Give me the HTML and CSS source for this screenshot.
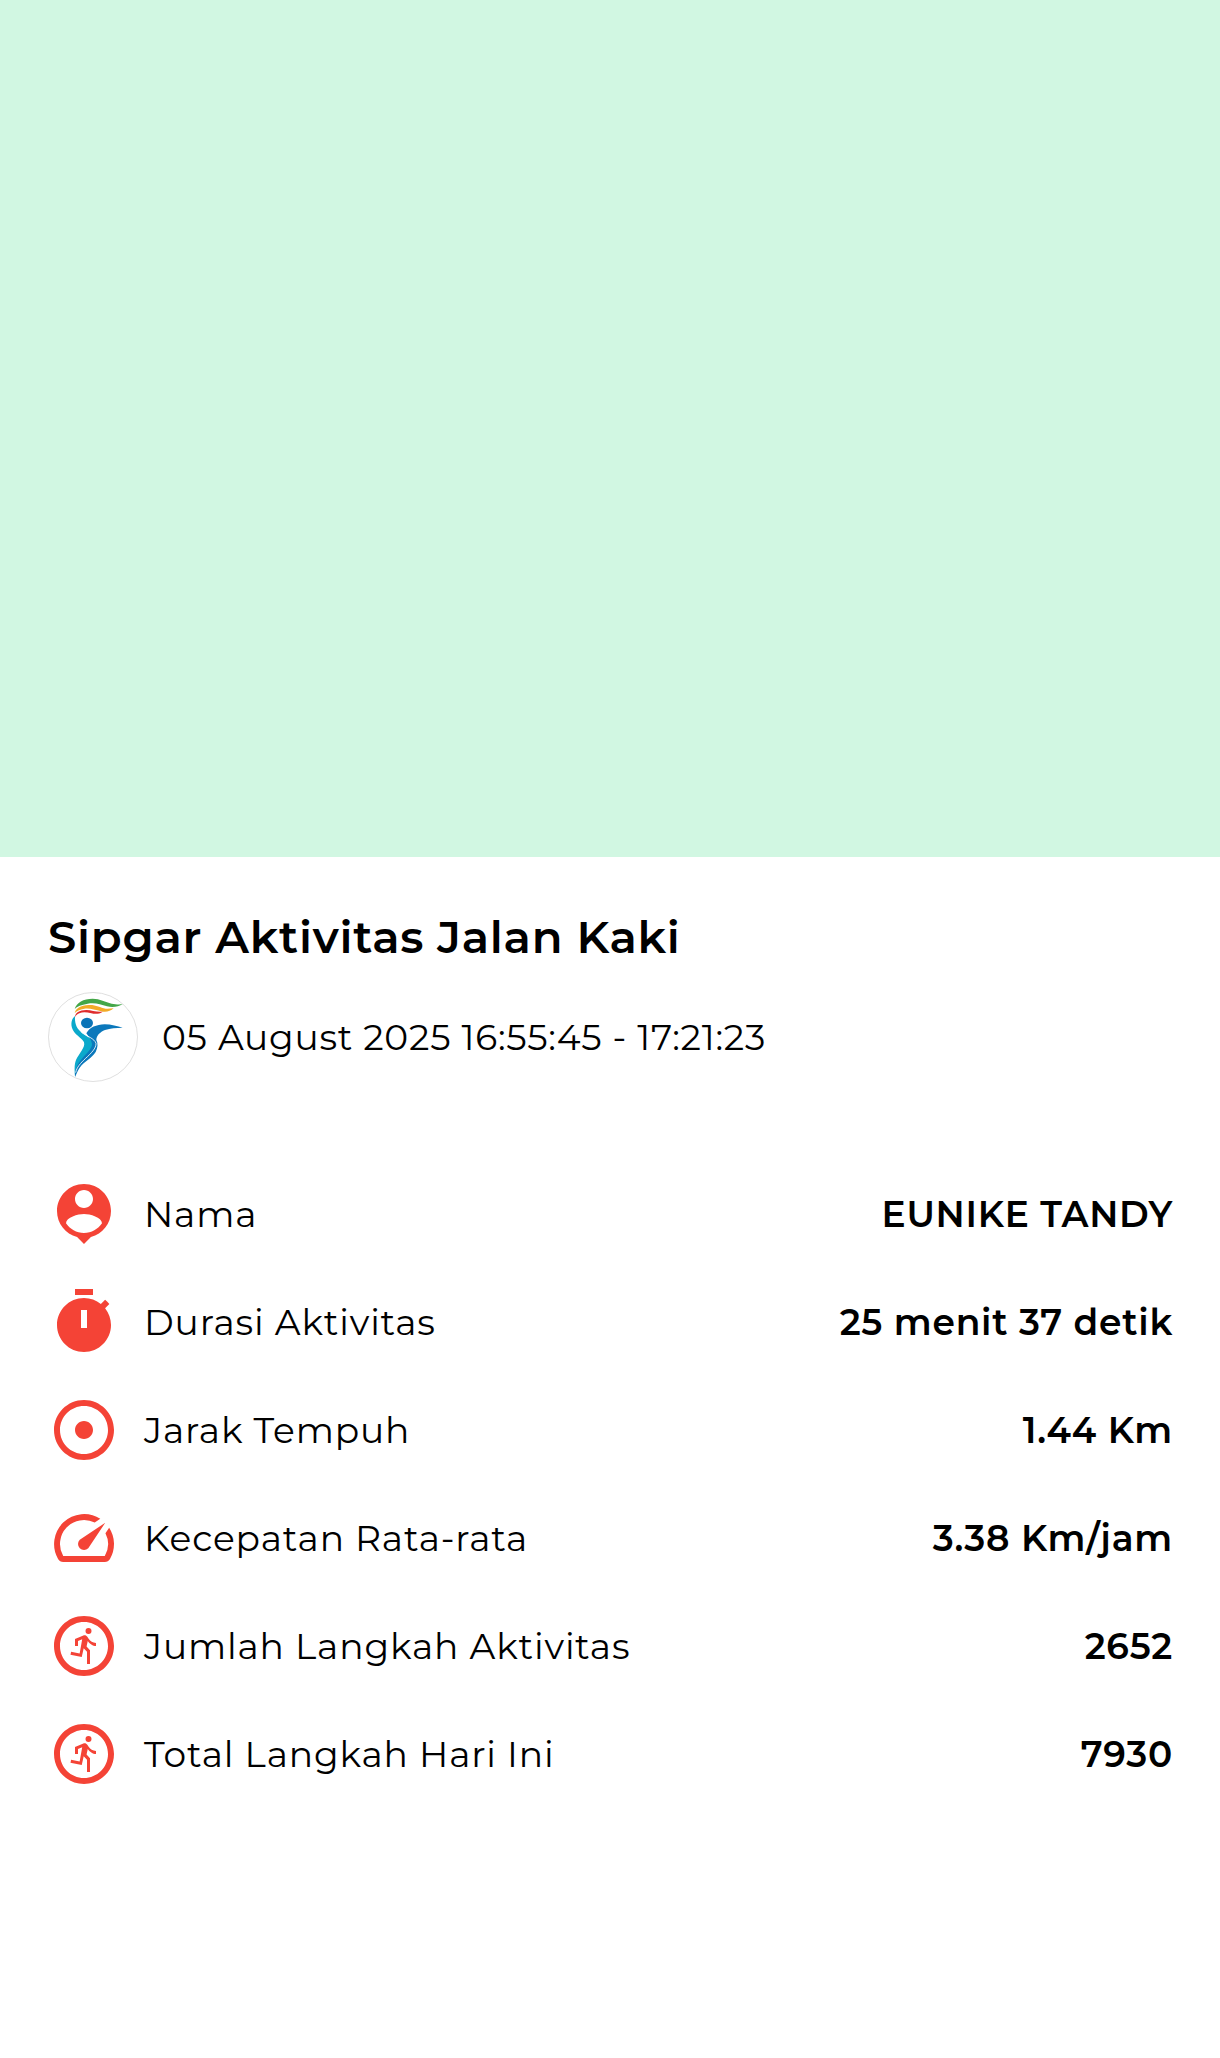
FILE: index.html
```
<!DOCTYPE html>
<html lang="id">
<head>
    <meta charset="UTF-8">
    <meta name="viewport" content="width=device-width, initial-scale=1.0">
    <title>Sipgar Aktivitas Jalan Kaki</title>
    <link rel="stylesheet" href="styles.css">
</head>
<body>
    <div class="map"></div>
    <div class="content">
        <h1>Sipgar Aktivitas Jalan Kaki</h1>
        <div class="activity-time">
            <svg class="logo" viewBox="24 36 270 270">
                <circle cx="159" cy="171" r="133.5" fill="#fff" stroke="#c9c9c9" stroke-width="1.8"/>
                <path fill="#43a648" d="M104 87C110 68 130 56 158 56C180 56 196 66 215 71C228 74 240 73 248 73C236 80 218 84 201 79C182 73 165 67 143 71C124 74 111 79 104 87Z"/>
                <path fill="#f2ab27" d="M104 100C106 86 122 76 146 75C168 74 180 83 197 86C206 87 214 85 221 85C211 94 198 98 183 94C165 89 150 84 133 86C119 88 109 93 104 100Z"/>
                <path fill="#df2c2c" d="M105 112C105 99 118 90 139 90C155 90 169 97 188 95C179 102 166 103 154 100C141 97 129 95 118 100C111 103 107 107 105 112Z"/>
                <ellipse cx="141" cy="129" rx="18" ry="16" fill="#0b74b7"/>
                <path fill="#0ba9cb" d="M105 108C92 118 91 139 101 154C110 168 128 176 132 187C137 202 117 221 108 240C102 255 104 274 105 290C108 263 127 246 145 228C160 213 169 200 165 190C160 177 136 168 122 155C108 143 104 128 105 108Z"/>
                <path fill="#0b78bb" d="M139 160C149 142 169 134 194 133C214 133 232 139 248 143C229 144 211 144 195 150C180 156 169 167 169 180C174 190 174 202 167 216C155 236 132 244 119 263C112 273 109 284 105 291C104 263 116 247 132 229C144 216 157 203 156 191C154 179 146 170 139 160Z"/>
                <path class="logo-line" d="M124 157C140 168 164 176 168 190C169 205 153 220 137 235C121 250 110 262 107 278"/>
            </svg>
            <span class="date">05 August 2025 16:55:45 - 17:21:23</span>
        </div>

        <div class="row">
            <svg class="icon" viewBox="0 0 24 24"><path d="M12 2c-4.97 0-9 4.03-9 9 0 4.17 2.84 7.67 6.69 8.69L12 22l2.31-2.31C18.16 18.67 21 15.17 21 11c0-4.97-4.03-9-9-9zm0 2c1.66 0 3 1.34 3 3s-1.34 3-3 3-3-1.34-3-3 1.34-3 3-3zm0 14.3c-2.5 0-4.71-1.28-6-3.22.03-1.99 4-3.08 6-3.08 1.99 0 5.97 1.09 6 3.08-1.29 1.94-3.5 3.22-6 3.22z"/></svg>
            <span class="label">Nama</span>
            <span class="value">EUNIKE TANDY</span>
        </div>
        <div class="row">
            <svg class="icon" viewBox="0 0 24 24"><path d="M15 1H9v2h6V1zm-4 13h2V8h-2v6zm8.03-6.61l1.42-1.42c-.43-.51-.9-.99-1.41-1.41l-1.42 1.42C16.07 4.74 14.12 4 12 4c-4.97 0-9 4.03-9 9s4.02 9 9 9 9-4.03 9-9c0-2.12-.74-4.07-1.97-5.61z"/></svg>
            <span class="label">Durasi Aktivitas</span>
            <span class="value">25 menit 37 detik</span>
        </div>
        <div class="row">
            <svg class="icon" viewBox="0 0 24 24"><path d="M12 2C6.48 2 2 6.48 2 12s4.48 10 10 10 10-4.48 10-10S17.52 2 12 2zm0 18c-4.42 0-8-3.58-8-8s3.58-8 8-8 8 3.58 8 8-3.58 8-8 8zm3-8c0 1.66-1.34 3-3 3s-3-1.34-3-3 1.34-3 3-3 3 1.34 3 3z"/></svg>
            <span class="label">Jarak Tempuh</span>
            <span class="value">1.44 Km</span>
        </div>
        <div class="row">
            <svg class="icon" viewBox="0 0 24 24"><path d="M20.38 8.57l-1.23 1.85a8 8 0 0 1-.22 7.58H5.07A8 8 0 0 1 15.58 6.85l1.85-1.23A10 10 0 0 0 3.35 19a2 2 0 0 0 1.72 1h13.85a2 2 0 0 0 1.74-1 10 10 0 0 0-.27-10.44zm-9.79 6.84a2 2 0 0 0 2.83 0l5.66-8.49-8.49 5.66a2 2 0 0 0 0 2.83z"/></svg>
            <span class="label">Kecepatan Rata-rata</span>
            <span class="value">3.38 Km/jam</span>
        </div>
        <div class="row">
            <svg class="icon" viewBox="0 0 24 24">
                <path id="run" d="M12 2C6.48 2 2 6.48 2 12s4.48 10 10 10 10-4.48 10-10S17.52 2 12 2zm0 18c-4.42 0-8-3.58-8-8s3.58-8 8-8 8 3.58 8 8-3.58 8-8 8zM13.5 6a1 1 0 1 0 0 2 1 1 0 1 0 0-2zM16 12v-1c-1.1 0-1.9-.6-2.4-1.3l-.5-.8c-.2-.3-.5-.5-.9-.5-.2 0-.3 0-.4.1L9 9.65V12h1v-1.7l1.4-.55-.85 4.75-2.85-.55-.2 1 3.75.75.65-2.95 1.1 1.15V18h1v-4.55l-1.15-1.25.4-1.9c.6.9 1.7 1.7 2.75 1.7z"/>
            </svg>
            <span class="label">Jumlah Langkah Aktivitas</span>
            <span class="value">2652</span>
        </div>
        <div class="row">
            <svg class="icon" viewBox="0 0 24 24"><use href="#run"/></svg>
            <span class="label">Total Langkah Hari Ini</span>
            <span class="value">7930</span>
        </div>
    </div>
</body>
</html>
```
FILE: styles.css
```
body {
    margin: 0;
    font-family: Montserrat, Inter, sans-serif;
    font-size: 36px;
    letter-spacing: 0.75px;
    color: #000;
    background-color: #fff;
}

.map {
    height: 857px;
    background-color: #d1f7e2;
}

.content {
    padding: 52px 48px 0;
}

h1 {
    margin: 0 0 28px;
    font-size: 45px;
    font-weight: 600;
    line-height: 55px;
}

.activity-time {
    display: flex;
    align-items: center;
    gap: 24px;
    margin-bottom: 78px;
}

.logo {
    width: 90px;
    height: 90px;
}

.logo-line {
    fill: none;
    stroke: #fff;
    stroke-width: 2.5;
}

.row {
    display: flex;
    align-items: center;
    height: 108px;
}

.icon {
    width: 72px;
    height: 72px;
    margin-right: 24px;
    fill: #f44336;
    fill-rule: evenodd;
}

.label {
    flex: 1;
    letter-spacing: 0.85px;
}

.value {
    font-weight: 600;
    margin-right: -1px;
}
```
